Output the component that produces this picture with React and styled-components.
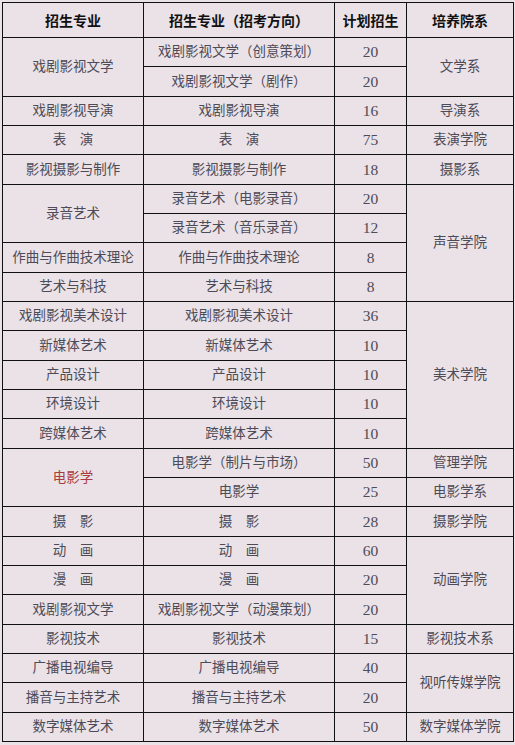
import React from "react";
import styled, { createGlobalStyle } from "styled-components";

const GlobalStyle = createGlobalStyle`
  html, body {
    margin: 0;
    padding: 0;
    background: #eae2e7;
  }
  #root {
    padding: 2px 0 0 2px;
  }
`;

const Table = styled.table`
  border-collapse: collapse;
  table-layout: fixed;
  width: 511px;
  background: #eae2e7;
  font-family: "Liberation Serif", "Noto Sans CJK SC", serif;
  font-size: 13.5px;
  color: #4d4b58;
`;

const Col = styled.col`
  width: ${({ $w }) => $w}px;
`;

const HeadCell = styled.th`
  height: 34px;
  padding: 0;
  border: 1.5px solid #111;
  font-family: "Noto Sans CJK SC", sans-serif;
  font-weight: 700;
  font-size: 14px;
  color: #111;
  text-align: center;
`;

const Row = styled.tr`
  height: 29.33px;
`;

const Cell = styled.td`
  padding: 0;
  border: 1.5px solid #111;
  text-align: center;
  vertical-align: middle;
  line-height: 1;
  font-size: ${({ $num }) => ($num ? "15.5px" : "13.5px")};
  color: ${({ $red }) => ($red ? "#a83a40" : "#4d4b58")};
`;

const rows = [
  { a: "戏剧影视文学", aSpan: 2, b: "戏剧影视文学（创意策划）", n: 20, d: "文学系", dSpan: 2 },
  { b: "戏剧影视文学（剧作）", n: 20 },
  { a: "戏剧影视导演", b: "戏剧影视导演", n: 16, d: "导演系" },
  { a: "表　演", b: "表　演", n: 75, d: "表演学院" },
  { a: "影视摄影与制作", b: "影视摄影与制作", n: 18, d: "摄影系" },
  { a: "录音艺术", aSpan: 2, b: "录音艺术（电影录音）", n: 20, d: "声音学院", dSpan: 4 },
  { b: "录音艺术（音乐录音）", n: 12 },
  { a: "作曲与作曲技术理论", b: "作曲与作曲技术理论", n: 8 },
  { a: "艺术与科技", b: "艺术与科技", n: 8 },
  { a: "戏剧影视美术设计", b: "戏剧影视美术设计", n: 36, d: "美术学院", dSpan: 5 },
  { a: "新媒体艺术", b: "新媒体艺术", n: 10 },
  { a: "产品设计", b: "产品设计", n: 10 },
  { a: "环境设计", b: "环境设计", n: 10 },
  { a: "跨媒体艺术", b: "跨媒体艺术", n: 10 },
  { a: "电影学", aSpan: 2, red: true, b: "电影学（制片与市场）", n: 50, d: "管理学院" },
  { b: "电影学", n: 25, d: "电影学系" },
  { a: "摄　影", b: "摄　影", n: 28, d: "摄影学院" },
  { a: "动　画", b: "动　画", n: 60, d: "动画学院", dSpan: 3 },
  { a: "漫　画", b: "漫　画", n: 20 },
  { a: "戏剧影视文学", b: "戏剧影视文学（动漫策划）", n: 20 },
  { a: "影视技术", b: "影视技术", n: 15, d: "影视技术系" },
  { a: "广播电视编导", b: "广播电视编导", n: 40, d: "视听传媒学院", dSpan: 2 },
  { a: "播音与主持艺术", b: "播音与主持艺术", n: 20 },
  { a: "数字媒体艺术", b: "数字媒体艺术", n: 50, d: "数字媒体学院" },
];

export default function App() {
  return (
    <>
      <GlobalStyle />
      <Table>
        <colgroup>
          <Col $w={141} />
          <Col $w={191} />
          <Col $w={72} />
          <Col $w={107} />
        </colgroup>
        <thead>
          <tr>
            <HeadCell>招生专业</HeadCell>
            <HeadCell>招生专业（招考方向）</HeadCell>
            <HeadCell>计划招生</HeadCell>
            <HeadCell>培养院系</HeadCell>
          </tr>
        </thead>
        <tbody>
          {rows.map((r, i) => (
            <Row key={i}>
              {r.a && (
                <Cell rowSpan={r.aSpan || 1} $red={r.red}>
                  {r.a}
                </Cell>
              )}
              <Cell>{r.b}</Cell>
              <Cell $num>{r.n}</Cell>
              {r.d && <Cell rowSpan={r.dSpan || 1}>{r.d}</Cell>}
            </Row>
          ))}
        </tbody>
      </Table>
    </>
  );
}
